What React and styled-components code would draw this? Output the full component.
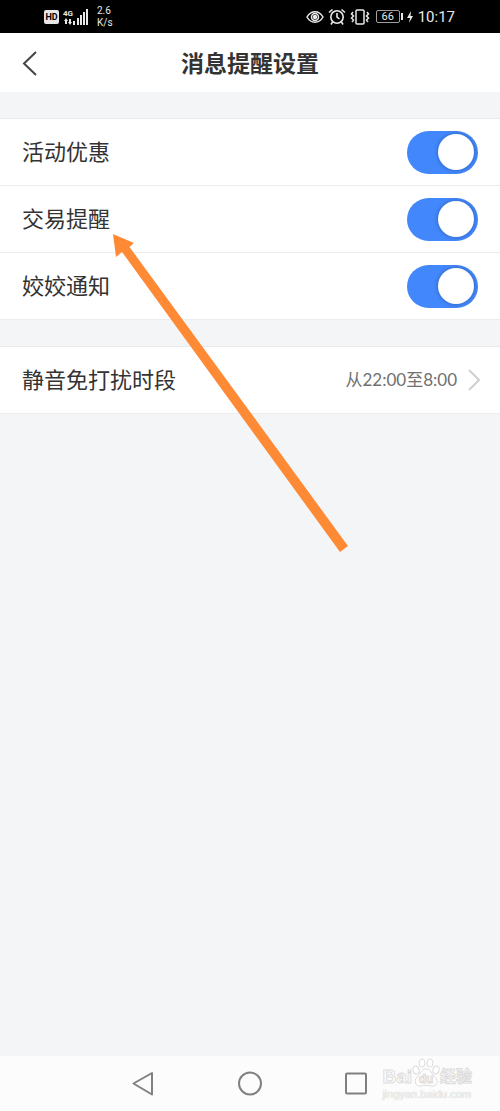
import { useState } from "react"
import styled, { createGlobalStyle } from "styled-components"

const opcoes = ["活动优惠", "交易提醒", "姣姣通知"]

export default function App() {

    const [ligados, setLigados] = useState([true, true, true])

    function alternar(indice) {
        setLigados(ligados.map((ligado, i) => i === indice ? !ligado : ligado))
    }

    return (
        <Pagina>
            <GlobalStyle/>
            <BarraStatus/>
            <Cabecalho>
                <Voltar type="button" aria-label="返回">
                    <svg width="16" height="26" viewBox="0 0 16 26" fill="none" stroke="#444" strokeWidth="2">
                        <path d="M14 2L2 13.500L14 25"/>
                    </svg>
                </Voltar>
                <Titulo>消息提醒设置</Titulo>
            </Cabecalho>
            <Conteudo>
                <Grupo>
                    {opcoes.map((opcao, i) => (
                        <Linha key={opcao}>
                            <Rotulo htmlFor={"opcao" + i}>{opcao}</Rotulo>
                            <Chave
                                id={"opcao" + i}
                                type="checkbox"
                                checked={ligados[i]}
                                onChange={() => alternar(i)}
                            />
                        </Linha>
                    ))}
                </Grupo>
                <Grupo>
                    <LinhaBotao type="button">
                        <span>静音免打扰时段</span>
                        <Horario>
                            从22:00至8:00
                            <svg width="12" height="22" viewBox="0 0 12 22" fill="none" stroke="#d0d0d0" strokeWidth="2">
                                <path d="M1 1L11 11L1 21"/>
                            </svg>
                        </Horario>
                    </LinhaBotao>
                </Grupo>
            </Conteudo>
            <Navegacao>
                <BotaoNav type="button" aria-label="后退">
                    <svg width="24" height="26" viewBox="0 0 24 26">
                        <path d="M20 2V23.500L1.500 12.500Z"/>
                    </svg>
                </BotaoNav>
                <BotaoNav type="button" aria-label="主页">
                    <svg width="26" height="26" viewBox="0 0 26 26">
                        <circle cx="13" cy="12.500" r="11"/>
                    </svg>
                </BotaoNav>
                <BotaoNav type="button" aria-label="最近任务">
                    <svg width="24" height="26" viewBox="0 0 24 26">
                        <rect x="2" y="2.500" width="20" height="20" rx="1"/>
                    </svg>
                </BotaoNav>
            </Navegacao>
            <Seta width="240" height="324" viewBox="0 0 240 324">
                <path d="M1 1L22 10L17.500 14L236 313L228 319L10 19L4 24Z"/>
            </Seta>
            <Marca>
                <MarcaLogo>
                    <span>Bai</span>
                    <svg width="28" height="30" viewBox="0 0 28 30">
                        <ellipse cx="4" cy="12" rx="3" ry="4" transform="rotate(-20 4 12)"/>
                        <ellipse cx="10" cy="5" rx="3" ry="4"/>
                        <ellipse cx="18" cy="5" rx="3" ry="4"/>
                        <ellipse cx="24" cy="12" rx="3" ry="4" transform="rotate(20 24 12)"/>
                        <path d="M14 11C9 11 9 16 5 19C1 23 4 29 9 28C12 27 16 27 19 28C25 29 27 23 23 19C19 16 19 11 14 11Z"/>
                        <text x="14" y="25" textAnchor="middle">du</text>
                    </svg>
                    <MarcaNome>经验</MarcaNome>
                </MarcaLogo>
                <MarcaSite>jingyan.baidu.com</MarcaSite>
            </Marca>
        </Pagina>
    )
}

function BarraStatus() {
    return (
        <Status>
            <GrupoStatus>
                <SeloHD>HD</SeloHD>
                <svg width="27" height="18" viewBox="0 0 27 18" fill="#e8e8e8">
                    <text x="0" y="8" fontSize="8" fontWeight="700">4G</text>
                    <path d="M3 10L5 13H4V16H2V13H1ZM7 17L5 14H6V11H8V14H9Z"/>
                    <path d="M10 13h2v4h-2zM14 10h2v7h-2zM17 7h2v10h-2zM20 4h2v13h-2zM23 1h2v16h-2z"/>
                </svg>
                <Velocidade>2.6<br/>K/s</Velocidade>
            </GrupoStatus>
            <GrupoStatus>
                <svg width="18" height="14" viewBox="0 0 18 14" fill="none" stroke="#e8e8e8" strokeWidth="1.500">
                    <path d="M1 7C5 0 13 0 17 7C13 14 5 14 1 7Z"/>
                    <circle cx="9" cy="7" r="3.500"/>
                    <circle cx="9" cy="7" r="1.500" fill="#e8e8e8"/>
                </svg>
                <svg width="18" height="18" viewBox="0 0 18 18" fill="none" stroke="#e8e8e8" strokeWidth="1.600">
                    <circle cx="9" cy="9" r="6.200"/>
                    <path d="M9 5V9L11.500 11M1 4.500L4.500 1.500M17 4.500L13.500 1.500M4.500 14L3 16.500M13.500 14L15 16.500"/>
                </svg>
                <svg width="20" height="18" viewBox="0 0 20 18" fill="none" stroke="#e8e8e8" strokeWidth="1.500">
                    <rect x="6" y="2" width="8" height="14" rx="1"/>
                    <path d="M3 4L1.500 6L3.500 8L1.500 10L3.500 12L2 14M17 4L18.500 6L16.500 8L18.500 10L16.500 12L18 14"/>
                </svg>
                <Bateria>66</Bateria>
                <svg width="8" height="14" viewBox="0 0 8 14" fill="#e8e8e8">
                    <path d="M5 1L1 8H4L3 13L7 6H4.500Z"/>
                </svg>
                <Hora>10:17</Hora>
            </GrupoStatus>
        </Status>
    )
}

const GlobalStyle = createGlobalStyle`
    * {
        box-sizing: border-box;
    }

    body {
        margin: 0;
        color: #333333;
        font-family: Lato, "Noto Sans CJK SC", sans-serif;
    }

    button {
        padding: 0;
        border: 0;
        background: none;
        color: inherit;
        font: inherit;
        cursor: pointer;
    }

    svg {
        display: block;
        flex-shrink: 0;
    }
`

const Pagina = styled.div`
    position: relative;
    min-height: 100vh;
    display: flex;
    flex-direction: column;
    background-color: #f4f5f7;
`

const Status = styled.div`
    height: 33px;
    padding: 0 45px 0 44px;
    display: flex;
    justify-content: space-between;
    align-items: center;
    background-color: #000000;
    color: #e8e8e8;
    font-family: Roboto, sans-serif;
`

const GrupoStatus = styled.div`
    display: flex;
    align-items: center;
    gap: 4px;
`

const SeloHD = styled.span`
    width: 15px;
    height: 14px;
    border-radius: 2px;
    background-color: #e8e8e8;
    color: #000000;
    font-size: 9px;
    font-weight: 700;
    line-height: 14px;
    text-align: center;
`

const Velocidade = styled.span`
    margin-left: 3px;
    font-size: 10px;
    line-height: 12px;
`

const Bateria = styled.span`
    position: relative;
    width: 24px;
    height: 13px;
    margin: 0 2px;
    border: 1px solid #a0a0a0;
    border-radius: 2px;
    font-size: 11px;
    line-height: 12px;
    text-align: center;

    &::after {
        content: "";
        position: absolute;
        top: 2px;
        right: -4px;
        width: 2px;
        height: 7px;
        background-color: #e8e8e8;
    }
`

const Hora = styled.span`
    font-size: 15px;
    line-height: 20px;
`

const Cabecalho = styled.header`
    height: 59px;
    padding: 0 22px;
    display: grid;
    grid-template-columns: 16px 1fr 16px;
    align-items: center;
    background-color: #ffffff;
`

const Voltar = styled.button`
    width: 16px;
`

const Titulo = styled.h1`
    margin: 0;
    font-size: 23px;
    font-weight: 700;
    line-height: 32px;
    text-align: center;
`

const Conteudo = styled.main`
    flex: 1;
    padding: 26px 0;
    display: flex;
    flex-direction: column;
    gap: 26px;
`

const Grupo = styled.section`
    border-top: 1px solid #e9e9eb;
    background-color: #ffffff;
`

const Linha = styled.div`
    width: 100%;
    height: 67px;
    padding: 0 22px;
    display: flex;
    justify-content: space-between;
    align-items: center;
    border-bottom: 1px solid #ececee;
    font-size: 22px;
    line-height: 32px;
`

const LinhaBotao = styled(Linha).attrs({ as: "button" })`
    && {
        padding: 0 20px 0 22px;
        border-bottom: 1px solid #ececee;
        font-size: 22px;
    }
`

const Rotulo = styled.label`
    flex: 1;
`

const Chave = styled.input`
    appearance: none;
    width: 71px;
    height: 43px;
    margin: 0;
    padding: 0 4px;
    display: flex;
    justify-content: flex-start;
    align-items: center;
    border-radius: 22px;
    background-color: #d8d8d8;
    cursor: pointer;

    &:checked {
        justify-content: flex-end;
        background-color: #4287fb;
    }

    &::before {
        content: "";
        width: 36px;
        height: 36px;
        border-radius: 50%;
        background-color: #ffffff;
        box-shadow: 0 0 4px rgba(0, 0, 0, 0.3);
    }
`

const Horario = styled.span`
    display: flex;
    align-items: center;
    gap: 11px;
    color: #707070;
    font-size: 17px;
    line-height: 24px;
`

const Navegacao = styled.nav`
    height: 55px;
    padding: 0 92px;
    display: flex;
    justify-content: space-around;
    align-items: center;
    background-color: #fcfcfc;
`

const BotaoNav = styled.button`
    svg {
        fill: none;
        stroke: #808080;
        stroke-width: 2;
        stroke-linejoin: round;
    }
`

const Seta = styled.svg`
    position: absolute;
    top: 233px;
    left: 112px;
    fill: #fe8a36;
    pointer-events: none;
`

const Marca = styled.div`
    position: absolute;
    right: 28px;
    bottom: 11px;
    color: #ffffff;
    font-family: "Liberation Sans", "Noto Sans CJK SC", sans-serif;
    -webkit-text-stroke: 1px #dcdcdc;
    pointer-events: none;
`

const MarcaLogo = styled.div`
    display: flex;
    align-items: flex-end;
    font-size: 19px;
    font-weight: 700;
    line-height: 22px;

    svg {
        fill: #ffffff;
        stroke: #dcdcdc;
    }

    text {
        font-size: 12px;
    }
`

const MarcaNome = styled.span`
    font-size: 16px;
`

const MarcaSite = styled.div`
    color: #f4f4f4;
    font-size: 11px;
    line-height: 12px;
    -webkit-text-stroke: 0;
    text-shadow: 0 0 1px #b8b8b8;
`
